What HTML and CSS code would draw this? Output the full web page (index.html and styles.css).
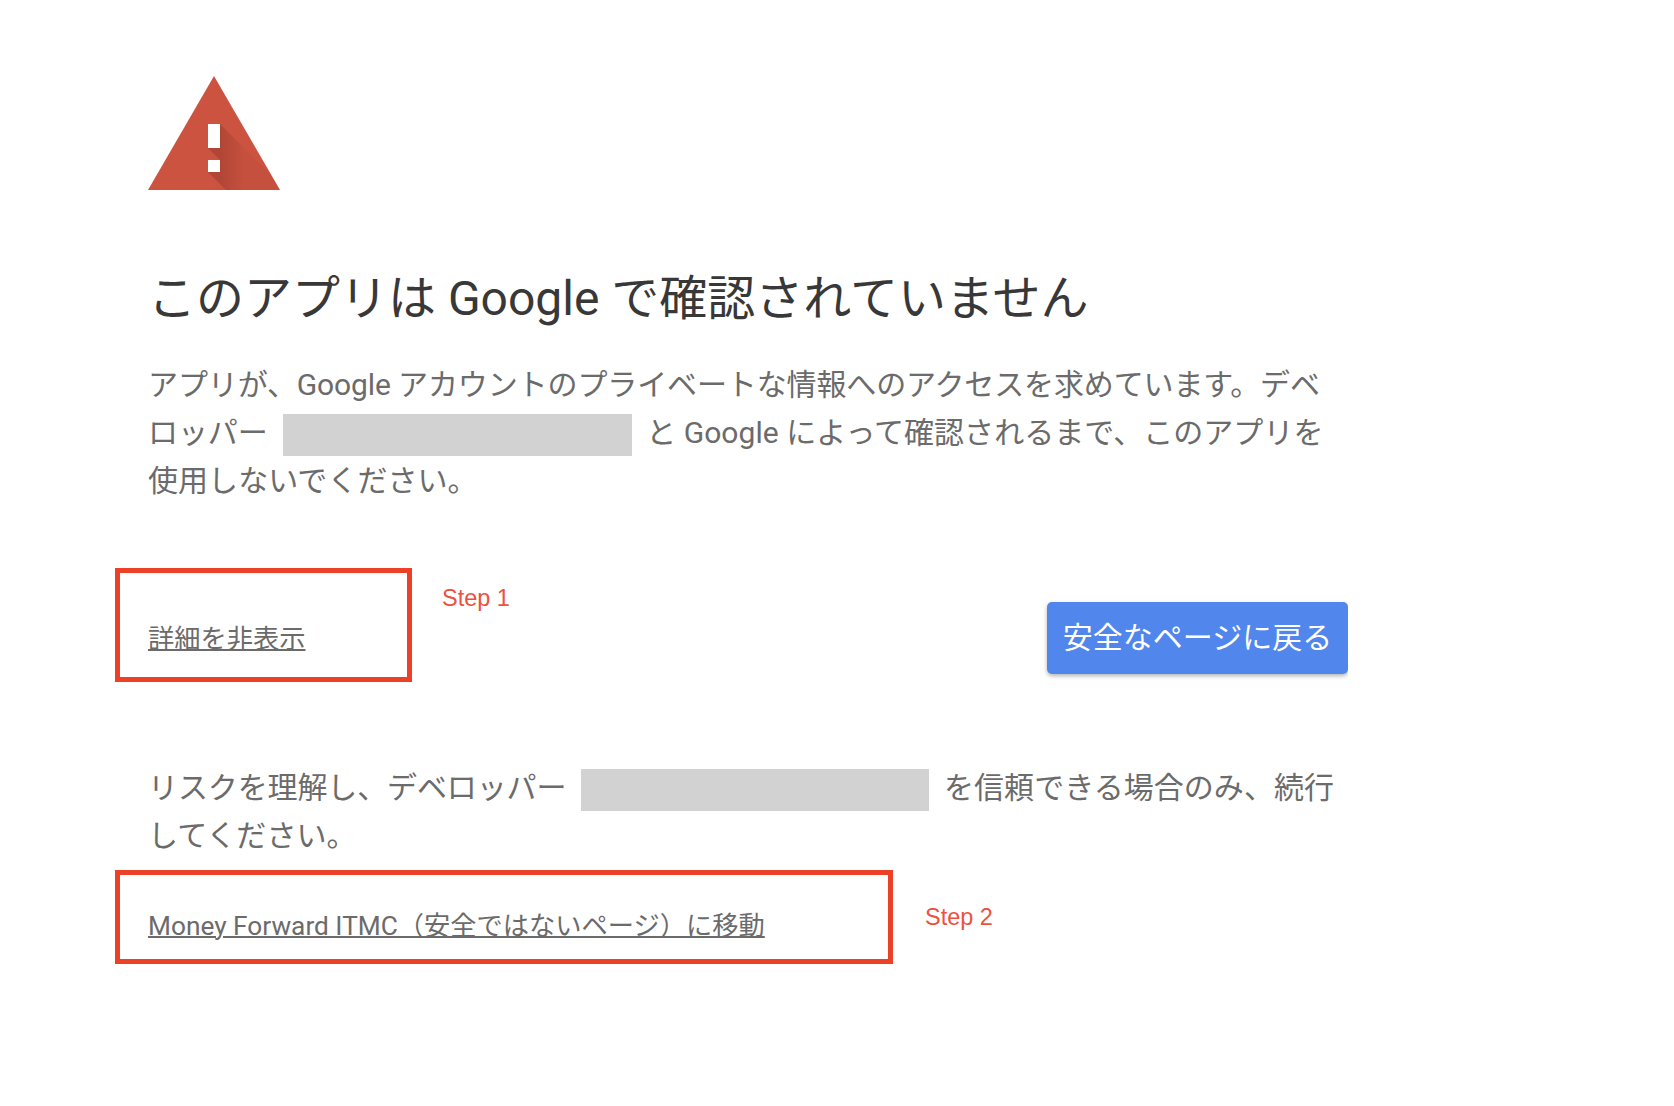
FILE: index.html
```html
<!DOCTYPE html>
<html lang="ja">

<head>
    <meta charset="UTF-8">
    <meta name="viewport" content="width=device-width, initial-scale=1.0">
    <title>このアプリは Google で確認されていません</title>
    <link rel="stylesheet" href="styles.css">
</head>

<body>
    <div class="page">
        <svg class="warn-icon" width="132" height="114" viewBox="0 0 132 114">
            <defs>
                <linearGradient id="warnShade" gradientUnits="userSpaceOnUse" x1="72" y1="75" x2="96" y2="75">
                    <stop offset="0" stop-color="#7a2a20" stop-opacity="0.32"></stop>
                    <stop offset="1" stop-color="#7a2a20" stop-opacity="0.07"></stop>
                </linearGradient>
                <clipPath id="warnClip">
                    <polygon points="66,0 132,114 0,114"></polygon>
                </clipPath>
            </defs>
            <polygon points="66,0 132,114 0,114" fill="#cb5340"></polygon>
            <polygon points="72,48 138,114 78,114 60,96 72,96 72,84 60,72 72,72" fill="url(#warnShade)" clip-path="url(#warnClip)"></polygon>
            <rect x="60" y="48" width="12" height="24" fill="#fff"></rect>
            <rect x="60" y="84" width="12" height="12" fill="#fff"></rect>
        </svg>

        <h1 class="heading">このアプリは Google で確認されていません</h1>

        <p class="text">
            アプリが、Google アカウントのプライベートな情報へのアクセスを求めています。デベロッパー
            <span class="redacted"></span>
            <span class="tail">と Google によって確認されるまで、このアプリを使用しないでください。</span>
        </p>

        <div class="actions">
            <a class="link hide-link" href="#">詳細を非表示</a>
            <button class="back-btn" type="button">安全なページに戻る</button>
        </div>

        <p class="text risk">
            リスクを理解し、デベロッパー
            <span class="redacted"></span>
            <span class="tail">を信頼できる場合のみ、続行してください。</span>
        </p>

        <a class="link proceed" href="#">Money Forward ITMC（安全ではないページ）に移動</a>

        <div class="mark mark-one"></div>
        <span class="step step-one">Step 1</span>
        <div class="mark mark-two"></div>
        <span class="step step-two">Step 2</span>
    </div>
</body>

</html>
```

FILE: styles.css
```css
body {
    margin: 0;
    background: #fff;
    font-family: Roboto, "Noto Sans CJK JP", sans-serif;
}

.page {
    position: relative;
    width: 1348px;
    height: 1106px;
    padding: 76px 0 0 148px;
    box-sizing: border-box;
    overflow: hidden;
}

.warn-icon {
    display: block;
}

.heading {
    margin: 79px 0 0;
    font-size: 48px;
    font-weight: 400;
    line-height: 60px;
    color: #383838;
}

.text {
    margin: 32px 0 0;
    font-size: 30px;
    line-height: 48px;
    letter-spacing: -0.12px;
    color: #6b6b6b;
}

.tail {
    letter-spacing: 0.05px;
}

.redacted {
    display: inline-block;
    width: 349px;
    height: 42px;
    margin: 0 7px 0 8px;
    background: #d2d2d2;
    vertical-align: middle;
}

.actions {
    display: flex;
    justify-content: space-between;
    align-items: center;
    margin-top: 97px;
}

.link {
    font-size: 26.25px;
    line-height: 36px;
    color: #6b6b6b;
    text-decoration: underline;
    text-decoration-thickness: 2px;
}

.hide-link {
    margin-top: 2px;
}

.back-btn {
    width: 301px;
    height: 72px;
    padding: 0 0 6px;
    border: none;
    border-radius: 5px;
    background: #5186ec;
    color: #fff;
    font-family: inherit;
    font-size: 30px;
    box-shadow: 0 2px 4px rgba(0, 0, 0, 0.3);
}

.risk {
    margin-top: 90px;
}

.risk .redacted {
    width: 348px;
    margin-left: 7px;
    margin-right: 8px;
}

.proceed {
    display: inline-block;
    margin-top: 48px;
}

/* annotations */
.mark {
    position: absolute;
    border: 5px solid #ec4126;
    box-sizing: border-box;
}

.mark-one {
    left: 115px;
    top: 568px;
    width: 297px;
    height: 114px;
}

.mark-two {
    left: 115px;
    top: 870px;
    width: 778px;
    height: 94px;
}

.step {
    position: absolute;
    font-family: "Liberation Sans", Arial, sans-serif;
    font-size: 23.5px;
    color: #ee5040;
}

.step-one {
    left: 442px;
    top: 585px;
}

.step-two {
    left: 925px;
    top: 904px;
}
```
